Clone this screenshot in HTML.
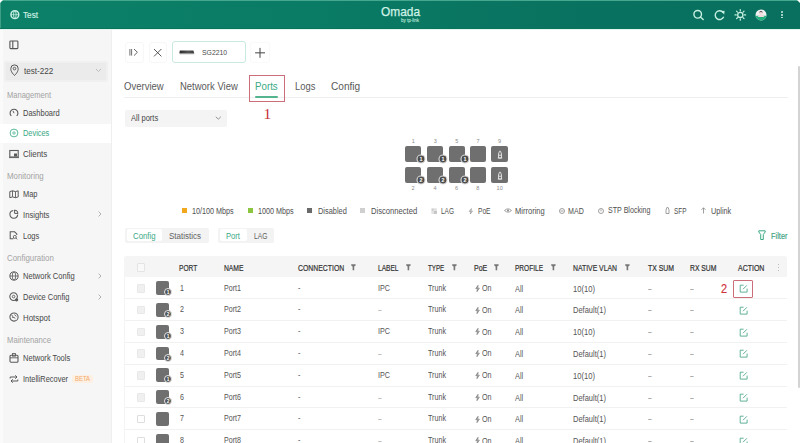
<!DOCTYPE html>
<html><head><meta charset="utf-8"><style>
html,body{margin:0;padding:0;width:800px;height:443px;overflow:hidden;background:#fff;position:relative}
.t{position:absolute;white-space:pre;line-height:20px;font-family:"Liberation Sans",sans-serif;transform-origin:0 50%}
.a{position:absolute;box-sizing:border-box}
svg{position:absolute;overflow:visible}
</style></head><body>
<div class="a" style="left:0.00px;top:0.00px;width:800.00px;height:29.00px;background:linear-gradient(90deg,#0c8168 0%,#0a7b65 40%,#09715f 75%,#09705f 100%);"></div>
<div class="a" style="left:0.00px;top:0.00px;width:800.00px;height:1.00px;background:#45a88e;"></div>
<div class="a" style="left:0.00px;top:0.00px;width:1.00px;height:29.00px;background:#3f9f86;"></div>
<div class="a" style="left:0.00px;top:28.00px;width:800.00px;height:1.00px;background:#07735b;"></div>
<div class="a" style="left:0.00px;top:29.00px;width:800.00px;height:1.00px;background:#e3f6ef;"></div>
<div class="a" style="left:0.00px;top:0.00px;width:3.00px;height:3.00px;background:#fff;clip-path:polygon(0 0,100% 0,0 100%)"></div>
<div class="a" style="left:797.00px;top:0.00px;width:3.00px;height:3.00px;background:#fff;clip-path:polygon(0 0,100% 0,100% 100%)"></div>
<div class="a" style="left:0.00px;top:30.00px;width:112.00px;height:413.00px;background:#f6f6f6;"></div>
<div class="a" style="left:0.00px;top:30.00px;width:2.50px;height:413.00px;background:#fafafa;"></div>
<div class="a" style="left:111.00px;top:30.00px;width:1.00px;height:413.00px;background:#efefef;"></div>
<svg style="left:9px;top:9px" width="12" height="12" viewBox="0 0 12 12"><circle cx="5.85" cy="5.65" r="3.9" fill="none" stroke="#c8f0e2" stroke-width="1.5"/><ellipse cx="5.85" cy="5.65" rx="1.3" ry="3.6" fill="none" stroke="#c8f0e2" stroke-width="0.9"/><line x1="2" y1="5.65" x2="9.7" y2="5.65" stroke="#c8f0e2" stroke-width="0.7"/></svg>
<svg style="left:692px;top:9px" width="14" height="14" viewBox="0 0 14 14"><circle cx="5.7" cy="5.3" r="3.8" fill="none" stroke="#c6f0e1" stroke-width="1.4"/><line x1="8.4" y1="8.1" x2="11.2" y2="10.6" stroke="#c6f0e1" stroke-width="1.4" stroke-linecap="round"/></svg>
<svg style="left:713px;top:9px" width="14" height="14" viewBox="0 0 14 14"><path d="M10.2 3.6 A4.4 4.4 0 1 0 10.7 7.8" fill="none" stroke="#c6f0e1" stroke-width="1.4"/><path d="M8 2.2 L11.6 1.8 L11.2 5.4 Z" fill="#c6f0e1"/></svg>
<svg style="left:733px;top:8px" width="14" height="14" viewBox="0 0 14 14"><circle cx="7.3" cy="6.9" r="2.6" fill="none" stroke="#c6f0e1" stroke-width="1.3"/><line x1="11.30" y1="6.90" x2="12.60" y2="6.90" stroke="#c6f0e1" stroke-width="1.2" stroke-linecap="round"/><line x1="10.13" y1="9.73" x2="11.05" y2="10.65" stroke="#c6f0e1" stroke-width="1.2" stroke-linecap="round"/><line x1="7.30" y1="10.90" x2="7.30" y2="12.20" stroke="#c6f0e1" stroke-width="1.2" stroke-linecap="round"/><line x1="4.47" y1="9.73" x2="3.55" y2="10.65" stroke="#c6f0e1" stroke-width="1.2" stroke-linecap="round"/><line x1="3.30" y1="6.90" x2="2.00" y2="6.90" stroke="#c6f0e1" stroke-width="1.2" stroke-linecap="round"/><line x1="4.47" y1="4.07" x2="3.55" y2="3.15" stroke="#c6f0e1" stroke-width="1.2" stroke-linecap="round"/><line x1="7.30" y1="2.90" x2="7.30" y2="1.60" stroke="#c6f0e1" stroke-width="1.2" stroke-linecap="round"/><line x1="10.13" y1="4.07" x2="11.05" y2="3.15" stroke="#c6f0e1" stroke-width="1.2" stroke-linecap="round"/></svg>
<svg style="left:755px;top:9px" width="12" height="12" viewBox="0 0 12 12"><defs><clipPath id="av"><circle cx="6" cy="5.9" r="5.5"/></clipPath></defs><circle cx="6" cy="5.9" r="5.5" fill="#f0f0f0"/><g clip-path="url(#av)"><rect x="0" y="6.8" width="12" height="6" fill="#22b07c"/><path d="M2.5 8 Q6 3.6 9.5 8 Z" fill="#f3d9dc"/><circle cx="6" cy="4" r="1.9" fill="#f3d9dc"/><path d="M3.9 3.6 Q6 0.6 8.1 3.6 Q6 2.6 3.9 3.6Z" fill="#3b3b3b"/></g></svg>
<div class="a" style="left:781.00px;top:11.20px;width:1.80px;height:1.60px;background:#cdeee3;border-radius:1px;"></div>
<div class="a" style="left:781.00px;top:14.00px;width:1.80px;height:1.60px;background:#cdeee3;border-radius:1px;"></div>
<div class="a" style="left:781.00px;top:16.80px;width:1.80px;height:1.60px;background:#cdeee3;border-radius:1px;"></div>
<svg style="left:9px;top:40px" width="10" height="10" viewBox="0 0 10 10"><rect x="0.9" y="1" width="8" height="7.6" rx="0.8" fill="none" stroke="#555" stroke-width="1.1"/><line x1="3.8" y1="1" x2="3.8" y2="8.6" stroke="#555" stroke-width="1.1"/></svg>
<div class="a" style="left:4.20px;top:60.60px;width:103.40px;height:21.40px;background:#ebebeb;border:2px solid #f0f0f0;border-radius:2px;"></div>
<svg style="left:10px;top:64px" width="9" height="13" viewBox="0 0 9 13"><path d="M4.5 11.5 C1 8 0.8 6 0.8 4.6 A3.7 3.7 0 0 1 8.2 4.6 C8.2 6 8 8 4.5 11.5Z" fill="none" stroke="#555" stroke-width="1"/><circle cx="4.5" cy="4.6" r="1.3" fill="none" stroke="#555" stroke-width="0.9"/></svg>
<svg style="left:95px;top:68px" width="7" height="5" viewBox="0 0 7 5"><path d="M1 1 L3.5 3.5 L6 1" fill="none" stroke="#b5b5b5" stroke-width="0.9"/></svg>
<div class="a" style="left:0.00px;top:124.30px;width:111.00px;height:18.30px;background:#ffffff;"></div>
<svg style="left:8.5px;top:108.3px" width="10" height="10" viewBox="0 0 10 10"><path d="M2.3 7.9 A3.9 3.9 0 1 1 7.7 7.9" fill="none" stroke="#5a5a5a" stroke-width="1.1"/><line x1="5" y1="5.2" x2="4" y2="2.9" stroke="#5a5a5a" stroke-width="1"/></svg>
<svg style="left:8.7px;top:128px" width="10" height="10" viewBox="0 0 10 10"><circle cx="5" cy="5" r="3.9" fill="none" stroke="#5ab999" stroke-width="1"/><circle cx="5" cy="5" r="1.2" fill="none" stroke="#5ab999" stroke-width="0.9"/></svg>
<svg style="left:9px;top:148.5px" width="10" height="10" viewBox="0 0 10 10"><rect x="0.8" y="1.5" width="8.4" height="6.5" fill="none" stroke="#5a5a5a" stroke-width="1.1"/><rect x="5" y="4.5" width="3" height="3" fill="#5a5a5a"/><line x1="0" y1="8.6" x2="10" y2="8.6" stroke="#5a5a5a" stroke-width="0.9"/></svg>
<svg style="left:9px;top:189.8px" width="10" height="9" viewBox="0 0 10 9"><path d="M0.8 1.6 L3.5 0.8 L6.5 1.6 L9.2 0.8 L9.2 6.9 L6.5 7.7 L3.5 6.9 L0.8 7.7 Z" fill="none" stroke="#5a5a5a" stroke-width="1"/><line x1="3.5" y1="0.8" x2="3.5" y2="6.9" stroke="#5a5a5a" stroke-width="0.9"/><line x1="6.5" y1="1.6" x2="6.5" y2="7.7" stroke="#5a5a5a" stroke-width="0.9"/></svg>
<svg style="left:9px;top:209.3px" width="10" height="10" viewBox="0 0 10 10"><path d="M4.3 1.4 A3.9 3.9 0 1 0 8.7 5.6" fill="none" stroke="#5a5a5a" stroke-width="1.05"/><path d="M5.6 1 A3.6 3.6 0 0 1 9 4.4 L5.6 4.4 Z" fill="none" stroke="#5a5a5a" stroke-width="1"/></svg>
<svg style="left:9px;top:230.5px" width="10" height="9" viewBox="0 0 10 9"><path d="M4.5 7.8 L1.2 7.8 L1.2 0.8 L5.6 0.8 L7.8 3 L7.8 4" fill="none" stroke="#5a5a5a" stroke-width="1.05"/><circle cx="5.8" cy="5.9" r="1.5" fill="none" stroke="#5a5a5a" stroke-width="0.9"/><line x1="6.9" y1="7" x2="8.3" y2="8.4" stroke="#5a5a5a" stroke-width="0.9"/></svg>
<svg style="left:9px;top:271px" width="10" height="10" viewBox="0 0 10 10"><circle cx="5" cy="5" r="4.1" fill="none" stroke="#5a5a5a" stroke-width="1"/><ellipse cx="5" cy="5" rx="1.7" ry="4.1" fill="none" stroke="#5a5a5a" stroke-width="0.8"/><line x1="0.9" y1="5" x2="9.1" y2="5" stroke="#5a5a5a" stroke-width="0.8"/></svg>
<svg style="left:9px;top:291.5px" width="10" height="10" viewBox="0 0 10 10"><circle cx="4.6" cy="4.6" r="3.8" fill="none" stroke="#5a5a5a" stroke-width="1.05"/><circle cx="4.6" cy="4.6" r="1.3" fill="none" stroke="#5a5a5a" stroke-width="0.9"/><circle cx="7.6" cy="7.8" r="1.6" fill="#5a5a5a"/></svg>
<svg style="left:9px;top:312px" width="10" height="10" viewBox="0 0 10 10"><circle cx="5" cy="5" r="4.1" fill="none" stroke="#5a5a5a" stroke-width="1.05"/><path d="M2.6 2.8 Q4.2 4.2 3.6 5.6 Q5 4.6 6.4 6.6 M5.4 2.6 L7.4 4.4" fill="none" stroke="#5a5a5a" stroke-width="0.9"/></svg>
<svg style="left:9px;top:353px" width="10" height="10" viewBox="0 0 10 10"><rect x="1" y="2.2" width="8" height="7" rx="1" fill="none" stroke="#5a5a5a" stroke-width="1.1"/><rect x="3.5" y="0.6" width="3" height="2.5" fill="none" stroke="#5a5a5a" stroke-width="0.9"/><line x1="1" y1="4.8" x2="9" y2="4.8" stroke="#5a5a5a" stroke-width="0.9"/></svg>
<svg style="left:9px;top:373.5px" width="10" height="10" viewBox="0 0 10 10"><path d="M1.2 4.5 L1.2 3 L8 3 M6.3 1.3 L8 3 L6.3 4.7 M8.8 5.5 L8.8 7 L2 7 M3.7 8.7 L2 7 L3.7 5.3" fill="none" stroke="#5a5a5a" stroke-width="1"/></svg>
<svg style="left:98px;top:211.1px" width="4" height="6" viewBox="0 0 4 6"><path d="M0.6 0.6 L3 3 L0.6 5.4" fill="none" stroke="#aaa" stroke-width="0.9"/></svg>
<svg style="left:98px;top:273px" width="4" height="6" viewBox="0 0 4 6"><path d="M0.6 0.6 L3 3 L0.6 5.4" fill="none" stroke="#aaa" stroke-width="0.9"/></svg>
<svg style="left:98px;top:293.5px" width="4" height="6" viewBox="0 0 4 6"><path d="M0.6 0.6 L3 3 L0.6 5.4" fill="none" stroke="#aaa" stroke-width="0.9"/></svg>
<div class="a" style="left:72.00px;top:374.60px;width:21.00px;height:8.50px;background:#fdf0e3;border-radius:2px;"></div>
<div class="a" style="left:125.00px;top:41.50px;width:18.50px;height:21.50px;background:#fff;border:1px solid #f7f7f7;border-radius:3px;"></div>
<div class="a" style="left:149.00px;top:41.50px;width:17.50px;height:21.50px;background:#fff;border:1px solid #f7f7f7;border-radius:3px;"></div>
<div class="a" style="left:172.30px;top:41.20px;width:73.60px;height:21.40px;background:#fff;border:1px solid #c8e9dd;border-radius:3px;"></div>
<div class="a" style="left:250.00px;top:41.50px;width:19.50px;height:21.50px;background:#fff;border:1px solid #f9f9f9;border-radius:3px;"></div>
<svg style="left:128px;top:47px" width="12" height="10" viewBox="0 0 12 10"><line x1="1.9" y1="2" x2="1.9" y2="8.6" stroke="#555" stroke-width="0.85"/><line x1="3.6" y1="2" x2="3.6" y2="8.6" stroke="#555" stroke-width="0.85"/><path d="M6 2 L9.4 5.3 L6 8.6" fill="none" stroke="#555" stroke-width="0.9"/></svg>
<svg style="left:153px;top:47.5px" width="10" height="10" viewBox="0 0 10 10"><path d="M1 1 L8.4 8.4 M8.4 1 L1 8.4" stroke="#444" stroke-width="0.9"/></svg>
<svg style="left:179px;top:49px" width="16" height="6" viewBox="0 0 16 6"><defs><linearGradient id="sw" x1="0" x2="1"><stop offset="0" stop-color="#2a2a2a"/><stop offset="0.6" stop-color="#555"/><stop offset="1" stop-color="#3a3a3a"/></linearGradient></defs><path d="M0.8 1.4 L14.4 1.4 L15.2 4.2 L0.4 4.2 Z" fill="url(#sw)"/><rect x="0.6" y="4.2" width="14.6" height="1" fill="#8a8a8a"/></svg>
<svg style="left:254px;top:46.5px" width="12" height="12" viewBox="0 0 12 12"><path d="M6 0.9 L6 10.8 M1.1 5.85 L11 5.85" stroke="#444" stroke-width="1"/></svg>
<div class="a" style="left:124.00px;top:97.00px;width:664.00px;height:1.00px;background:#f0eeee;"></div>
<div class="a" style="left:255.00px;top:95.60px;width:22.70px;height:2.00px;background:#52b48c;border-radius:1px;"></div>
<div class="a" style="left:249.00px;top:75.00px;width:36.30px;height:27.00px;border:1.2px solid #cc6e7a;"></div>
<div class="a" style="left:124.80px;top:109.80px;width:102.70px;height:16.80px;background:#f4f4f4;border-radius:2px;"></div>
<svg style="left:215.4px;top:116.2px" width="7" height="5" viewBox="0 0 7 5"><path d="M0.8 0.8 L3.3 3.2 L5.8 0.8" fill="none" stroke="#888" stroke-width="0.9"/></svg>
<div class="a" style="left:405.10px;top:145.50px;width:16.30px;height:16.30px;background:#6f6f6f;border-radius:2px;"></div>
<svg style="left:416.1px;top:153.5px" width="10" height="10" viewBox="0 0 10 10"><circle cx="5" cy="5" r="4" fill="#4d4d4d" stroke="#dcdcdc" stroke-width="1.1"/><text x="5" y="6.9" text-anchor="middle" font-family="Liberation Sans" font-weight="bold" font-size="5.4" fill="#fff">1</text></svg>
<div class="a" style="left:405.10px;top:166.50px;width:16.30px;height:16.30px;background:#6f6f6f;border-radius:2px;"></div>
<svg style="left:416.1px;top:174.5px" width="10" height="10" viewBox="0 0 10 10"><circle cx="5" cy="5" r="4" fill="#4d4d4d" stroke="#dcdcdc" stroke-width="1.1"/><text x="5" y="6.9" text-anchor="middle" font-family="Liberation Sans" font-weight="bold" font-size="5.4" fill="#fff">2</text></svg>
<div class="a" style="left:427.00px;top:145.50px;width:16.30px;height:16.30px;background:#6f6f6f;border-radius:2px;"></div>
<svg style="left:438px;top:153.5px" width="10" height="10" viewBox="0 0 10 10"><circle cx="5" cy="5" r="4" fill="#4d4d4d" stroke="#dcdcdc" stroke-width="1.1"/><text x="5" y="6.9" text-anchor="middle" font-family="Liberation Sans" font-weight="bold" font-size="5.4" fill="#fff">1</text></svg>
<div class="a" style="left:427.00px;top:166.50px;width:16.30px;height:16.30px;background:#6f6f6f;border-radius:2px;"></div>
<svg style="left:438px;top:174.5px" width="10" height="10" viewBox="0 0 10 10"><circle cx="5" cy="5" r="4" fill="#4d4d4d" stroke="#dcdcdc" stroke-width="1.1"/><text x="5" y="6.9" text-anchor="middle" font-family="Liberation Sans" font-weight="bold" font-size="5.4" fill="#fff">2</text></svg>
<div class="a" style="left:448.60px;top:145.50px;width:16.30px;height:16.30px;background:#6f6f6f;border-radius:2px;"></div>
<svg style="left:459.6px;top:153.5px" width="10" height="10" viewBox="0 0 10 10"><circle cx="5" cy="5" r="4" fill="#4d4d4d" stroke="#dcdcdc" stroke-width="1.1"/><text x="5" y="6.9" text-anchor="middle" font-family="Liberation Sans" font-weight="bold" font-size="5.4" fill="#fff">1</text></svg>
<div class="a" style="left:448.60px;top:166.50px;width:16.30px;height:16.30px;background:#6f6f6f;border-radius:2px;"></div>
<svg style="left:459.6px;top:174.5px" width="10" height="10" viewBox="0 0 10 10"><circle cx="5" cy="5" r="4" fill="#4d4d4d" stroke="#dcdcdc" stroke-width="1.1"/><text x="5" y="6.9" text-anchor="middle" font-family="Liberation Sans" font-weight="bold" font-size="5.4" fill="#fff">2</text></svg>
<div class="a" style="left:469.80px;top:145.50px;width:16.30px;height:16.30px;background:#6f6f6f;border-radius:2px;"></div>
<div class="a" style="left:469.80px;top:166.50px;width:16.30px;height:16.30px;background:#6f6f6f;border-radius:2px;"></div>
<div class="a" style="left:491.40px;top:145.50px;width:16.30px;height:16.30px;background:#6f6f6f;border-radius:2px;"></div>
<svg style="left:496.9px;top:149.5px" width="6" height="9" viewBox="0 0 6 9"><path d="M1.5 8 L1.5 4 L2.5 1.2 L3.5 1.2 L4.5 4 L4.5 8 Z M0.8 8 L5.2 8" fill="none" stroke="#e6e6e6" stroke-width="0.9"/><rect x="2.3" y="4.6" width="1.4" height="1.4" fill="#e6e6e6"/></svg>
<div class="a" style="left:491.40px;top:166.50px;width:16.30px;height:16.30px;background:#6f6f6f;border-radius:2px;"></div>
<svg style="left:496.9px;top:170.5px" width="6" height="9" viewBox="0 0 6 9"><path d="M1.5 8 L1.5 4 L2.5 1.2 L3.5 1.2 L4.5 4 L4.5 8 Z M0.8 8 L5.2 8" fill="none" stroke="#e6e6e6" stroke-width="0.9"/><rect x="2.3" y="4.6" width="1.4" height="1.4" fill="#e6e6e6"/></svg>
<div class="a" style="left:182.30px;top:208.15px;width:5.20px;height:5.20px;background:#f2a81e;"></div>
<div class="a" style="left:247.80px;top:208.15px;width:5.20px;height:5.20px;background:#8cc63f;"></div>
<div class="a" style="left:307.30px;top:208.15px;width:5.20px;height:5.20px;background:#6a6a6a;"></div>
<div class="a" style="left:360.30px;top:208.15px;width:5.20px;height:5.20px;background:#cfcfcf;"></div>
<svg style="left:430.5px;top:207.75px" width="7" height="7" viewBox="0 0 7 7"><rect x="0.3" y="0.3" width="5.6" height="5.6" fill="#e2e2e2"/><path d="M0.8 1.2 L3 1.2 M0.8 2.4 L2.2 2.4" stroke="#bbb" stroke-width="0.6"/><rect x="3" y="3" width="2.9" height="2.9" fill="#c4c4c4"/></svg>
<svg style="left:468px;top:207.55px" width="6" height="7" viewBox="0 0 6 7"><path d="M3.4 0.6 L1.2 3.5 L2.9 3.5 L2.3 6 L4.5 3.1 L2.8 3.1 Z" fill="none" stroke="#888" stroke-width="0.65"/></svg>
<svg style="left:503.5px;top:208.25px" width="8" height="5" viewBox="0 0 8 5"><path d="M0.5 2.5 Q4 -0.8 7.5 2.5 Q4 5.8 0.5 2.5Z" fill="none" stroke="#888" stroke-width="0.8"/><circle cx="4" cy="2.5" r="1" fill="#888"/></svg>
<svg style="left:558.5px;top:207.75px" width="6" height="6" viewBox="0 0 6 6"><circle cx="3" cy="3" r="2.5" fill="none" stroke="#888" stroke-width="0.8"/><line x1="1.5" y1="3" x2="4.5" y2="3" stroke="#888" stroke-width="0.8"/></svg>
<svg style="left:597.5px;top:207.75px" width="6" height="6" viewBox="0 0 6 6"><circle cx="3" cy="3" r="2.5" fill="none" stroke="#888" stroke-width="0.8"/><line x1="3" y1="1.5" x2="3" y2="3.3" stroke="#888" stroke-width="0.8"/></svg>
<svg style="left:664.8px;top:207.25px" width="5" height="7" viewBox="0 0 5 7"><path d="M1 6.5 L1 3 L1.8 0.6 L3.2 0.6 L4 3 L4 6.5 Z" fill="none" stroke="#888" stroke-width="0.8"/></svg>
<svg style="left:701px;top:207.25px" width="5" height="7" viewBox="0 0 5 7"><path d="M2.5 6.5 L2.5 0.8 M0.5 2.8 L2.5 0.8 L4.5 2.8" fill="none" stroke="#888" stroke-width="0.8"/></svg>
<div class="a" style="left:125.00px;top:227.60px;width:84.00px;height:15.40px;background:#f3f3f3;border-radius:2px;"></div>
<div class="a" style="left:127.00px;top:229.20px;width:35.00px;height:12.20px;background:#ffffff;border-radius:2px;"></div>
<div class="a" style="left:218.00px;top:227.60px;width:56.40px;height:15.40px;background:#f3f3f3;border-radius:2px;"></div>
<div class="a" style="left:220.00px;top:229.20px;width:27.00px;height:12.20px;background:#ffffff;border-radius:2px;"></div>
<svg style="left:758px;top:229.8px" width="8" height="10.5" viewBox="0 0 8 10.5"><path d="M0.8 0.8 L7.2 0.8 L7.2 2 L5.3 4.5 L5.3 9.5 L2.7 9.5 L2.7 4.5 L0.8 2 Z" fill="none" stroke="#3aa985" stroke-width="1"/></svg>
<div class="a" style="left:124.25px;top:256.00px;width:662.75px;height:20.60px;background:#f5f5f5;border-radius:3px 3px 0 0;"></div>
<div class="a" style="left:136.90px;top:263.00px;width:8.40px;height:8.80px;background:#f9f9f9;border:1px solid #e4e4e4;border-radius:1px;"></div>
<svg style="left:351.25px;top:264px" width="5" height="7" viewBox="0 0 5 7"><path d="M0.2 0.3 L4.6 0.3 L4.6 1.6 L3.2 2.6 L3.2 6.2 L1.6 6.2 L1.6 2.6 L0.2 1.6 Z" fill="#777"/></svg>
<svg style="left:405.5px;top:264px" width="5" height="7" viewBox="0 0 5 7"><path d="M0.2 0.3 L4.6 0.3 L4.6 1.6 L3.2 2.6 L3.2 6.2 L1.6 6.2 L1.6 2.6 L0.2 1.6 Z" fill="#777"/></svg>
<svg style="left:452px;top:264px" width="5" height="7" viewBox="0 0 5 7"><path d="M0.2 0.3 L4.6 0.3 L4.6 1.6 L3.2 2.6 L3.2 6.2 L1.6 6.2 L1.6 2.6 L0.2 1.6 Z" fill="#777"/></svg>
<svg style="left:494.25px;top:264px" width="5" height="7" viewBox="0 0 5 7"><path d="M0.2 0.3 L4.6 0.3 L4.6 1.6 L3.2 2.6 L3.2 6.2 L1.6 6.2 L1.6 2.6 L0.2 1.6 Z" fill="#777"/></svg>
<svg style="left:550.5px;top:264px" width="5" height="7" viewBox="0 0 5 7"><path d="M0.2 0.3 L4.6 0.3 L4.6 1.6 L3.2 2.6 L3.2 6.2 L1.6 6.2 L1.6 2.6 L0.2 1.6 Z" fill="#777"/></svg>
<svg style="left:624.5px;top:264px" width="5" height="7" viewBox="0 0 5 7"><path d="M0.2 0.3 L4.6 0.3 L4.6 1.6 L3.2 2.6 L3.2 6.2 L1.6 6.2 L1.6 2.6 L0.2 1.6 Z" fill="#777"/></svg>
<div class="a" style="left:777.60px;top:264.00px;width:1.00px;height:1.00px;background:#bbb;"></div>
<div class="a" style="left:777.60px;top:267.00px;width:1.00px;height:1.00px;background:#bbb;"></div>
<div class="a" style="left:777.60px;top:270.00px;width:1.00px;height:1.00px;background:#bbb;"></div>
<div class="a" style="left:124.00px;top:298.40px;width:663.00px;height:1.00px;background:#f1f1f1;"></div>
<div class="a" style="left:124.00px;top:320.20px;width:663.00px;height:1.00px;background:#f1f1f1;"></div>
<div class="a" style="left:124.00px;top:342.00px;width:663.00px;height:1.00px;background:#f1f1f1;"></div>
<div class="a" style="left:124.00px;top:363.80px;width:663.00px;height:1.00px;background:#f1f1f1;"></div>
<div class="a" style="left:124.00px;top:385.60px;width:663.00px;height:1.00px;background:#f1f1f1;"></div>
<div class="a" style="left:124.00px;top:407.40px;width:663.00px;height:1.00px;background:#f1f1f1;"></div>
<div class="a" style="left:124.00px;top:429.20px;width:663.00px;height:1.00px;background:#f1f1f1;"></div>
<div class="a" style="left:137.00px;top:284.00px;width:8.30px;height:8.60px;background:#f0f0f0;border:1px solid #e8e8e8;border-radius:1px;"></div>
<div class="a" style="left:155.50px;top:281.20px;width:13.80px;height:13.80px;background:#6f6f6f;border-radius:2px;"></div>
<svg style="left:163.4px;top:287.2px" width="10" height="10" viewBox="0 0 10 10"><circle cx="5" cy="5" r="3.5" fill="#555" stroke="#e6e6e6" stroke-width="1"/><text x="5" y="6.7" text-anchor="middle" font-family="Liberation Sans" font-weight="bold" font-size="4.8" fill="#fff">1</text></svg>
<svg style="left:475.4px;top:284.8px" width="5" height="7" viewBox="0 0 5 7"><path d="M3 0.4 L0.8 3.6 L2.5 3.6 L2 6.6 L4.3 3.2 L2.6 3.2 Z" fill="none" stroke="#666" stroke-width="0.7"/></svg>
<svg style="left:738.5px;top:283.9px" width="9" height="9" viewBox="0 0 9 9"><path d="M4.6 1.2 L1.2 1.2 L1.2 8.1 L8.1 8.1 L8.1 4.6" fill="none" stroke="#46a386" stroke-width="0.85" stroke-linejoin="miter"/><path d="M4 5.2 L7.9 1.3" stroke="#46a386" stroke-width="0.85"/></svg>
<div class="a" style="left:137.00px;top:305.80px;width:8.30px;height:8.60px;background:#f0f0f0;border:1px solid #e8e8e8;border-radius:1px;"></div>
<div class="a" style="left:155.50px;top:303.00px;width:13.80px;height:13.80px;background:#6f6f6f;border-radius:2px;"></div>
<svg style="left:163.4px;top:309.0px" width="10" height="10" viewBox="0 0 10 10"><circle cx="5" cy="5" r="3.5" fill="#555" stroke="#e6e6e6" stroke-width="1"/><text x="5" y="6.7" text-anchor="middle" font-family="Liberation Sans" font-weight="bold" font-size="4.8" fill="#fff">2</text></svg>
<svg style="left:475.4px;top:306.6px" width="5" height="7" viewBox="0 0 5 7"><path d="M3 0.4 L0.8 3.6 L2.5 3.6 L2 6.6 L4.3 3.2 L2.6 3.2 Z" fill="none" stroke="#666" stroke-width="0.7"/></svg>
<svg style="left:738.5px;top:305.7px" width="9" height="9" viewBox="0 0 9 9"><path d="M4.6 1.2 L1.2 1.2 L1.2 8.1 L8.1 8.1 L8.1 4.6" fill="none" stroke="#46a386" stroke-width="0.85" stroke-linejoin="miter"/><path d="M4 5.2 L7.9 1.3" stroke="#46a386" stroke-width="0.85"/></svg>
<div class="a" style="left:137.00px;top:327.60px;width:8.30px;height:8.60px;background:#f0f0f0;border:1px solid #e8e8e8;border-radius:1px;"></div>
<div class="a" style="left:155.50px;top:324.80px;width:13.80px;height:13.80px;background:#6f6f6f;border-radius:2px;"></div>
<svg style="left:163.4px;top:330.8px" width="10" height="10" viewBox="0 0 10 10"><circle cx="5" cy="5" r="3.5" fill="#555" stroke="#e6e6e6" stroke-width="1"/><text x="5" y="6.7" text-anchor="middle" font-family="Liberation Sans" font-weight="bold" font-size="4.8" fill="#fff">1</text></svg>
<svg style="left:475.4px;top:328.40000000000003px" width="5" height="7" viewBox="0 0 5 7"><path d="M3 0.4 L0.8 3.6 L2.5 3.6 L2 6.6 L4.3 3.2 L2.6 3.2 Z" fill="none" stroke="#666" stroke-width="0.7"/></svg>
<svg style="left:738.5px;top:327.5px" width="9" height="9" viewBox="0 0 9 9"><path d="M4.6 1.2 L1.2 1.2 L1.2 8.1 L8.1 8.1 L8.1 4.6" fill="none" stroke="#46a386" stroke-width="0.85" stroke-linejoin="miter"/><path d="M4 5.2 L7.9 1.3" stroke="#46a386" stroke-width="0.85"/></svg>
<div class="a" style="left:137.00px;top:349.40px;width:8.30px;height:8.60px;background:#f0f0f0;border:1px solid #e8e8e8;border-radius:1px;"></div>
<div class="a" style="left:155.50px;top:346.60px;width:13.80px;height:13.80px;background:#6f6f6f;border-radius:2px;"></div>
<svg style="left:163.4px;top:352.6px" width="10" height="10" viewBox="0 0 10 10"><circle cx="5" cy="5" r="3.5" fill="#555" stroke="#e6e6e6" stroke-width="1"/><text x="5" y="6.7" text-anchor="middle" font-family="Liberation Sans" font-weight="bold" font-size="4.8" fill="#fff">2</text></svg>
<svg style="left:475.4px;top:350.20000000000005px" width="5" height="7" viewBox="0 0 5 7"><path d="M3 0.4 L0.8 3.6 L2.5 3.6 L2 6.6 L4.3 3.2 L2.6 3.2 Z" fill="none" stroke="#666" stroke-width="0.7"/></svg>
<svg style="left:738.5px;top:349.3px" width="9" height="9" viewBox="0 0 9 9"><path d="M4.6 1.2 L1.2 1.2 L1.2 8.1 L8.1 8.1 L8.1 4.6" fill="none" stroke="#46a386" stroke-width="0.85" stroke-linejoin="miter"/><path d="M4 5.2 L7.9 1.3" stroke="#46a386" stroke-width="0.85"/></svg>
<div class="a" style="left:137.00px;top:371.20px;width:8.30px;height:8.60px;background:#f0f0f0;border:1px solid #e8e8e8;border-radius:1px;"></div>
<div class="a" style="left:155.50px;top:368.40px;width:13.80px;height:13.80px;background:#6f6f6f;border-radius:2px;"></div>
<svg style="left:163.4px;top:374.4px" width="10" height="10" viewBox="0 0 10 10"><circle cx="5" cy="5" r="3.5" fill="#555" stroke="#e6e6e6" stroke-width="1"/><text x="5" y="6.7" text-anchor="middle" font-family="Liberation Sans" font-weight="bold" font-size="4.8" fill="#fff">1</text></svg>
<svg style="left:475.4px;top:372.0px" width="5" height="7" viewBox="0 0 5 7"><path d="M3 0.4 L0.8 3.6 L2.5 3.6 L2 6.6 L4.3 3.2 L2.6 3.2 Z" fill="none" stroke="#666" stroke-width="0.7"/></svg>
<svg style="left:738.5px;top:371.09999999999997px" width="9" height="9" viewBox="0 0 9 9"><path d="M4.6 1.2 L1.2 1.2 L1.2 8.1 L8.1 8.1 L8.1 4.6" fill="none" stroke="#46a386" stroke-width="0.85" stroke-linejoin="miter"/><path d="M4 5.2 L7.9 1.3" stroke="#46a386" stroke-width="0.85"/></svg>
<div class="a" style="left:137.00px;top:393.00px;width:8.30px;height:8.60px;background:#f0f0f0;border:1px solid #e8e8e8;border-radius:1px;"></div>
<div class="a" style="left:155.50px;top:390.20px;width:13.80px;height:13.80px;background:#6f6f6f;border-radius:2px;"></div>
<svg style="left:163.4px;top:396.2px" width="10" height="10" viewBox="0 0 10 10"><circle cx="5" cy="5" r="3.5" fill="#555" stroke="#e6e6e6" stroke-width="1"/><text x="5" y="6.7" text-anchor="middle" font-family="Liberation Sans" font-weight="bold" font-size="4.8" fill="#fff">2</text></svg>
<svg style="left:475.4px;top:393.8px" width="5" height="7" viewBox="0 0 5 7"><path d="M3 0.4 L0.8 3.6 L2.5 3.6 L2 6.6 L4.3 3.2 L2.6 3.2 Z" fill="none" stroke="#666" stroke-width="0.7"/></svg>
<svg style="left:738.5px;top:392.9px" width="9" height="9" viewBox="0 0 9 9"><path d="M4.6 1.2 L1.2 1.2 L1.2 8.1 L8.1 8.1 L8.1 4.6" fill="none" stroke="#46a386" stroke-width="0.85" stroke-linejoin="miter"/><path d="M4 5.2 L7.9 1.3" stroke="#46a386" stroke-width="0.85"/></svg>
<div class="a" style="left:137.00px;top:414.80px;width:8.30px;height:8.60px;background:#fff;border:1px solid #dedede;border-radius:1px;"></div>
<div class="a" style="left:155.50px;top:412.00px;width:13.80px;height:13.80px;background:#6f6f6f;border-radius:2px;"></div>
<svg style="left:475.4px;top:415.6px" width="5" height="7" viewBox="0 0 5 7"><path d="M3 0.4 L0.8 3.6 L2.5 3.6 L2 6.6 L4.3 3.2 L2.6 3.2 Z" fill="none" stroke="#666" stroke-width="0.7"/></svg>
<svg style="left:738.5px;top:414.7px" width="9" height="9" viewBox="0 0 9 9"><path d="M4.6 1.2 L1.2 1.2 L1.2 8.1 L8.1 8.1 L8.1 4.6" fill="none" stroke="#46a386" stroke-width="0.85" stroke-linejoin="miter"/><path d="M4 5.2 L7.9 1.3" stroke="#46a386" stroke-width="0.85"/></svg>
<div class="a" style="left:137.00px;top:436.60px;width:8.30px;height:8.60px;background:#fff;border:1px solid #dedede;border-radius:1px;"></div>
<div class="a" style="left:155.50px;top:433.80px;width:13.80px;height:13.80px;background:#6f6f6f;border-radius:2px;"></div>
<svg style="left:475.4px;top:437.4px" width="5" height="7" viewBox="0 0 5 7"><path d="M3 0.4 L0.8 3.6 L2.5 3.6 L2 6.6 L4.3 3.2 L2.6 3.2 Z" fill="none" stroke="#666" stroke-width="0.7"/></svg>
<svg style="left:738.5px;top:436.49999999999994px" width="9" height="9" viewBox="0 0 9 9"><path d="M4.6 1.2 L1.2 1.2 L1.2 8.1 L8.1 8.1 L8.1 4.6" fill="none" stroke="#46a386" stroke-width="0.85" stroke-linejoin="miter"/><path d="M4 5.2 L7.9 1.3" stroke="#46a386" stroke-width="0.85"/></svg>
<div class="a" style="left:124.00px;top:277.00px;width:1.00px;height:166.00px;background:#f4f4f4;"></div>
<div class="a" style="left:733.40px;top:279.50px;width:19.20px;height:18.80px;border:1.2px solid #cc6e7a;border-radius:1px;"></div>
<div class="a" style="left:797.60px;top:65.60px;width:2.40px;height:322.70px;background:#d3d3d3;border-radius:1px;"></div>
<span class="t" style="left:23.00px;top:5.40px;font-size:9.41px;color:#d2f2e6;font-family:'Liberation Sans',sans-serif;font-weight:400;transform:scaleX(0.8696);-webkit-text-stroke:0.15px #d2f2e6;">Test</span><span class="t" style="left:381.00px;top:2.40px;font-size:12.25px;color:#d0f3e6;font-family:'Liberation Sans',sans-serif;font-weight:400;transform:scaleX(0.9709);-webkit-text-stroke:0.25px #d0f3e6;">Omada</span><span class="t" style="left:401.00px;top:10.60px;font-size:4.50px;color:#b8e6d6;font-family:'Liberation Sans',sans-serif;font-weight:400;-webkit-text-stroke:0.1px #b8e6d6;">by tp-link</span><span class="t" style="left:23.70px;top:61.40px;font-size:9.33px;color:#474747;font-family:'Liberation Sans',sans-serif;font-weight:400;transform:scaleX(0.8696);">test-222</span><span class="t" style="left:6.90px;top:84.90px;font-size:8.69px;color:#a3a3a3;font-family:'Liberation Sans',sans-serif;font-weight:400;transform:scaleX(0.8696);">Management</span><span class="t" style="left:22.70px;top:102.90px;font-size:8.63px;color:#474747;font-family:'Liberation Sans',sans-serif;font-weight:400;transform:scaleX(0.8696);">Dashboard</span><span class="t" style="left:22.70px;top:123.40px;font-size:8.50px;color:#3aa985;font-family:'Liberation Sans',sans-serif;font-weight:400;transform:scaleX(0.8696);">Devices</span><span class="t" style="left:22.70px;top:143.90px;font-size:9.14px;color:#474747;font-family:'Liberation Sans',sans-serif;font-weight:400;transform:scaleX(0.8696);">Clients</span><span class="t" style="left:6.90px;top:166.20px;font-size:9.06px;color:#a3a3a3;font-family:'Liberation Sans',sans-serif;font-weight:400;transform:scaleX(0.8696);">Monitoring</span><span class="t" style="left:23.10px;top:184.40px;font-size:8.57px;color:#474747;font-family:'Liberation Sans',sans-serif;font-weight:400;transform:scaleX(0.8696);">Map</span><span class="t" style="left:23.10px;top:204.50px;font-size:8.84px;color:#474747;font-family:'Liberation Sans',sans-serif;font-weight:400;transform:scaleX(0.8696);">Insights</span><span class="t" style="left:23.10px;top:225.80px;font-size:8.64px;color:#474747;font-family:'Liberation Sans',sans-serif;font-weight:400;transform:scaleX(0.8696);">Logs</span><span class="t" style="left:6.90px;top:248.00px;font-size:9.07px;color:#a3a3a3;font-family:'Liberation Sans',sans-serif;font-weight:400;transform:scaleX(0.8696);">Configuration</span><span class="t" style="left:23.10px;top:266.40px;font-size:8.71px;color:#474747;font-family:'Liberation Sans',sans-serif;font-weight:400;transform:scaleX(0.8696);">Network Config</span><span class="t" style="left:23.10px;top:286.90px;font-size:8.57px;color:#474747;font-family:'Liberation Sans',sans-serif;font-weight:400;transform:scaleX(0.8696);">Device Config</span><span class="t" style="left:23.10px;top:307.60px;font-size:9.04px;color:#474747;font-family:'Liberation Sans',sans-serif;font-weight:400;transform:scaleX(0.8696);">Hotspot</span><span class="t" style="left:6.90px;top:329.80px;font-size:8.84px;color:#a3a3a3;font-family:'Liberation Sans',sans-serif;font-weight:400;transform:scaleX(0.8696);">Maintenance</span><span class="t" style="left:23.10px;top:348.30px;font-size:8.69px;color:#474747;font-family:'Liberation Sans',sans-serif;font-weight:400;transform:scaleX(0.8696);">Network Tools</span><span class="t" style="left:23.10px;top:368.70px;font-size:8.56px;color:#474747;font-family:'Liberation Sans',sans-serif;font-weight:400;transform:scaleX(0.8696);">IntelliRecover</span><span class="t" style="left:75.00px;top:369.40px;font-size:6.80px;color:#f2a86a;font-family:'Liberation Sans',sans-serif;font-weight:400;transform:scaleX(0.8696);">BETA</span><span class="t" style="left:201.50px;top:42.50px;font-size:8.10px;color:#4a4a4a;font-family:'Liberation Sans',sans-serif;font-weight:400;transform:scaleX(0.8478);">SG2210</span><span class="t" style="left:124.30px;top:76.00px;font-size:10.60px;color:#5a5a5a;font-family:'Liberation Sans',sans-serif;font-weight:400;transform:scaleX(0.8987);">Overview</span><span class="t" style="left:180.20px;top:76.00px;font-size:10.60px;color:#5a5a5a;font-family:'Liberation Sans',sans-serif;font-weight:400;transform:scaleX(0.8947);">Network View</span><span class="t" style="left:255.00px;top:76.00px;font-size:10.60px;color:#3aa985;font-family:'Liberation Sans',sans-serif;font-weight:400;transform:scaleX(0.9175);">Ports</span><span class="t" style="left:294.60px;top:76.00px;font-size:10.60px;color:#5a5a5a;font-family:'Liberation Sans',sans-serif;font-weight:400;transform:scaleX(0.8875);">Logs</span><span class="t" style="left:331.40px;top:76.00px;font-size:10.60px;color:#5a5a5a;font-family:'Liberation Sans',sans-serif;font-weight:400;transform:scaleX(0.9530);">Config</span><span class="t" style="left:263.60px;top:103.60px;font-size:15.50px;color:#c8303a;font-family:'Liberation Serif',sans-serif;font-weight:400;">1</span><span class="t" style="left:130.80px;top:108.20px;font-size:8.66px;color:#474747;font-family:'Liberation Sans',sans-serif;font-weight:400;transform:scaleX(0.8696);">All ports</span><span class="t" style="left:411.80px;top:130.50px;font-size:5.50px;color:#8a8a8a;font-family:'Liberation Sans',sans-serif;font-weight:400;">1</span><span class="t" style="left:411.60px;top:178.20px;font-size:5.50px;color:#8a8a8a;font-family:'Liberation Sans',sans-serif;font-weight:400;">2</span><span class="t" style="left:433.70px;top:130.50px;font-size:5.50px;color:#8a8a8a;font-family:'Liberation Sans',sans-serif;font-weight:400;">3</span><span class="t" style="left:433.50px;top:178.20px;font-size:5.50px;color:#8a8a8a;font-family:'Liberation Sans',sans-serif;font-weight:400;">4</span><span class="t" style="left:455.30px;top:130.50px;font-size:5.50px;color:#8a8a8a;font-family:'Liberation Sans',sans-serif;font-weight:400;">5</span><span class="t" style="left:455.10px;top:178.20px;font-size:5.50px;color:#8a8a8a;font-family:'Liberation Sans',sans-serif;font-weight:400;">6</span><span class="t" style="left:476.50px;top:130.50px;font-size:5.50px;color:#8a8a8a;font-family:'Liberation Sans',sans-serif;font-weight:400;">7</span><span class="t" style="left:476.30px;top:178.20px;font-size:5.50px;color:#8a8a8a;font-family:'Liberation Sans',sans-serif;font-weight:400;">8</span><span class="t" style="left:498.10px;top:130.50px;font-size:5.50px;color:#8a8a8a;font-family:'Liberation Sans',sans-serif;font-weight:400;">9</span><span class="t" style="left:496.60px;top:178.20px;font-size:5.50px;color:#8a8a8a;font-family:'Liberation Sans',sans-serif;font-weight:400;">10</span><span class="t" style="left:192.00px;top:201.15px;font-size:8.30px;color:#4f4f4f;font-family:'Liberation Sans',sans-serif;font-weight:400;transform:scaleX(0.8696);">10/100 Mbps</span><span class="t" style="left:257.50px;top:201.15px;font-size:8.31px;color:#4f4f4f;font-family:'Liberation Sans',sans-serif;font-weight:400;transform:scaleX(0.8696);">1000 Mbps</span><span class="t" style="left:317.50px;top:201.15px;font-size:8.50px;color:#4f4f4f;font-family:'Liberation Sans',sans-serif;font-weight:400;transform:scaleX(0.8696);">Disabled</span><span class="t" style="left:370.50px;top:201.15px;font-size:8.78px;color:#4f4f4f;font-family:'Liberation Sans',sans-serif;font-weight:400;transform:scaleX(0.8696);">Disconnected</span><span class="t" style="left:440.75px;top:201.15px;font-size:8.80px;color:#4f4f4f;font-family:'Liberation Sans',sans-serif;font-weight:400;transform:scaleX(0.7382);">LAG</span><span class="t" style="left:477.50px;top:201.15px;font-size:8.80px;color:#4f4f4f;font-family:'Liberation Sans',sans-serif;font-weight:400;transform:scaleX(0.7515);">PoE</span><span class="t" style="left:514.50px;top:201.15px;font-size:8.67px;color:#4f4f4f;font-family:'Liberation Sans',sans-serif;font-weight:400;transform:scaleX(0.8696);">Mirroring</span><span class="t" style="left:568.00px;top:201.15px;font-size:8.80px;color:#4f4f4f;font-family:'Liberation Sans',sans-serif;font-weight:400;transform:scaleX(0.8054);">MAD</span><span class="t" style="left:608.00px;top:201.15px;font-size:8.17px;color:#4f4f4f;font-family:'Liberation Sans',sans-serif;font-weight:400;transform:scaleX(0.8696);">STP Blocking</span><span class="t" style="left:674.25px;top:201.15px;font-size:8.80px;color:#4f4f4f;font-family:'Liberation Sans',sans-serif;font-weight:400;transform:scaleX(0.7304);">SFP</span><span class="t" style="left:710.50px;top:201.15px;font-size:8.38px;color:#4f4f4f;font-family:'Liberation Sans',sans-serif;font-weight:400;transform:scaleX(0.8696);">Uplink</span><span class="t" style="left:133.00px;top:225.50px;font-size:8.99px;color:#3aa985;font-family:'Liberation Sans',sans-serif;font-weight:400;transform:scaleX(0.8696);">Config</span><span class="t" style="left:169.00px;top:225.50px;font-size:9.20px;color:#606060;font-family:'Liberation Sans',sans-serif;font-weight:400;transform:scaleX(0.8696);">Statistics</span><span class="t" style="left:225.60px;top:225.50px;font-size:8.78px;color:#3aa985;font-family:'Liberation Sans',sans-serif;font-weight:400;transform:scaleX(0.8696);">Port</span><span class="t" style="left:253.60px;top:225.50px;font-size:8.80px;color:#606060;font-family:'Liberation Sans',sans-serif;font-weight:400;transform:scaleX(0.7609);">LAG</span><span class="t" style="left:770.75px;top:226.10px;font-size:8.54px;color:#3a9f80;font-family:'Liberation Sans',sans-serif;font-weight:400;transform:scaleX(0.8696);-webkit-text-stroke:0.15px #3a9f80;">Filter</span><span class="t" style="left:179.25px;top:258.00px;font-size:8.30px;color:#333;font-family:'Liberation Sans',sans-serif;font-weight:400;transform:scaleX(0.7967);-webkit-text-stroke:0.2px #333;">PORT</span><span class="t" style="left:223.50px;top:258.00px;font-size:8.30px;color:#333;font-family:'Liberation Sans',sans-serif;font-weight:400;transform:scaleX(0.8132);-webkit-text-stroke:0.2px #333;">NAME</span><span class="t" style="left:297.50px;top:258.00px;font-size:8.30px;color:#333;font-family:'Liberation Sans',sans-serif;font-weight:400;transform:scaleX(0.8289);-webkit-text-stroke:0.2px #333;">CONNECTION</span><span class="t" style="left:377.50px;top:258.00px;font-size:8.30px;color:#333;font-family:'Liberation Sans',sans-serif;font-weight:400;transform:scaleX(0.7933);-webkit-text-stroke:0.2px #333;">LABEL</span><span class="t" style="left:428.25px;top:258.00px;font-size:8.30px;color:#333;font-family:'Liberation Sans',sans-serif;font-weight:400;transform:scaleX(0.7496);-webkit-text-stroke:0.2px #333;">TYPE</span><span class="t" style="left:473.75px;top:258.00px;font-size:8.30px;color:#333;font-family:'Liberation Sans',sans-serif;font-weight:400;transform:scaleX(0.8446);-webkit-text-stroke:0.2px #333;">PoE</span><span class="t" style="left:515.00px;top:258.00px;font-size:8.30px;color:#333;font-family:'Liberation Sans',sans-serif;font-weight:400;transform:scaleX(0.7884);-webkit-text-stroke:0.2px #333;">PROFILE</span><span class="t" style="left:573.00px;top:258.00px;font-size:8.30px;color:#333;font-family:'Liberation Sans',sans-serif;font-weight:400;transform:scaleX(0.8247);-webkit-text-stroke:0.2px #333;">NATIVE VLAN</span><span class="t" style="left:648.00px;top:258.00px;font-size:8.30px;color:#333;font-family:'Liberation Sans',sans-serif;font-weight:400;transform:scaleX(0.8292);-webkit-text-stroke:0.2px #333;">TX SUM</span><span class="t" style="left:689.60px;top:258.00px;font-size:8.30px;color:#333;font-family:'Liberation Sans',sans-serif;font-weight:400;transform:scaleX(0.8178);-webkit-text-stroke:0.2px #333;">RX SUM</span><span class="t" style="left:738.00px;top:258.00px;font-size:8.30px;color:#333;font-family:'Liberation Sans',sans-serif;font-weight:400;transform:scaleX(0.8419);-webkit-text-stroke:0.2px #333;">ACTION</span><span class="t" style="left:721.40px;top:279.40px;font-size:12.20px;color:#d0303a;font-family:'Liberation Sans',sans-serif;font-weight:400;transform:scaleX(0.8929);-webkit-text-stroke:0.2px #d0303a;">2</span><span class="t" style="left:180.00px;top:278.60px;font-size:8.20px;color:#555555;font-family:'Liberation Sans',sans-serif;font-weight:400;transform:scaleX(0.8696);">1</span><span class="t" style="left:223.50px;top:278.60px;font-size:8.18px;color:#555555;font-family:'Liberation Sans',sans-serif;font-weight:400;transform:scaleX(0.8696);">Port1</span><span class="t" style="left:298.30px;top:278.60px;font-size:8.20px;color:#555555;font-family:'Liberation Sans',sans-serif;font-weight:400;transform:scaleX(0.8696);">-</span><span class="t" style="left:378.00px;top:278.60px;font-size:8.28px;color:#555555;font-family:'Liberation Sans',sans-serif;font-weight:400;transform:scaleX(0.8696);">IPC</span><span class="t" style="left:428.20px;top:278.60px;font-size:8.22px;color:#555555;font-family:'Liberation Sans',sans-serif;font-weight:400;transform:scaleX(0.8696);">Trunk</span><span class="t" style="left:481.60px;top:278.00px;font-size:8.60px;color:#555555;font-family:'Liberation Sans',sans-serif;font-weight:400;transform:scaleX(0.8368);">On</span><span class="t" style="left:515.20px;top:278.60px;font-size:8.60px;color:#555555;font-family:'Liberation Sans',sans-serif;font-weight:400;transform:scaleX(0.8579);">All</span><span class="t" style="left:573.00px;top:278.60px;font-size:8.75px;color:#555555;font-family:'Liberation Sans',sans-serif;font-weight:400;transform:scaleX(0.8696);">10(10)</span><span class="t" style="left:648.00px;top:278.60px;font-size:7.40px;color:#666;font-family:'Liberation Sans',sans-serif;font-weight:400;transform:scaleX(0.8696);">–</span><span class="t" style="left:690.00px;top:278.60px;font-size:7.40px;color:#666;font-family:'Liberation Sans',sans-serif;font-weight:400;transform:scaleX(0.8696);">–</span><span class="t" style="left:180.00px;top:300.40px;font-size:8.20px;color:#555555;font-family:'Liberation Sans',sans-serif;font-weight:400;transform:scaleX(0.8696);">2</span><span class="t" style="left:223.50px;top:300.40px;font-size:8.18px;color:#555555;font-family:'Liberation Sans',sans-serif;font-weight:400;transform:scaleX(0.8696);">Port2</span><span class="t" style="left:298.30px;top:300.40px;font-size:8.20px;color:#555555;font-family:'Liberation Sans',sans-serif;font-weight:400;transform:scaleX(0.8696);">-</span><span class="t" style="left:378.00px;top:300.40px;font-size:7.20px;color:#888;font-family:'Liberation Sans',sans-serif;font-weight:400;transform:scaleX(0.8696);">–</span><span class="t" style="left:428.20px;top:300.40px;font-size:8.22px;color:#555555;font-family:'Liberation Sans',sans-serif;font-weight:400;transform:scaleX(0.8696);">Trunk</span><span class="t" style="left:481.60px;top:299.80px;font-size:8.60px;color:#555555;font-family:'Liberation Sans',sans-serif;font-weight:400;transform:scaleX(0.8368);">On</span><span class="t" style="left:515.20px;top:300.40px;font-size:8.60px;color:#555555;font-family:'Liberation Sans',sans-serif;font-weight:400;transform:scaleX(0.8579);">All</span><span class="t" style="left:573.00px;top:300.40px;font-size:8.64px;color:#555555;font-family:'Liberation Sans',sans-serif;font-weight:400;transform:scaleX(0.8696);">Default(1)</span><span class="t" style="left:648.00px;top:300.40px;font-size:7.40px;color:#666;font-family:'Liberation Sans',sans-serif;font-weight:400;transform:scaleX(0.8696);">–</span><span class="t" style="left:690.00px;top:300.40px;font-size:7.40px;color:#666;font-family:'Liberation Sans',sans-serif;font-weight:400;transform:scaleX(0.8696);">–</span><span class="t" style="left:180.00px;top:322.20px;font-size:8.20px;color:#555555;font-family:'Liberation Sans',sans-serif;font-weight:400;transform:scaleX(0.8696);">3</span><span class="t" style="left:223.50px;top:322.20px;font-size:8.18px;color:#555555;font-family:'Liberation Sans',sans-serif;font-weight:400;transform:scaleX(0.8696);">Port3</span><span class="t" style="left:298.30px;top:322.20px;font-size:8.20px;color:#555555;font-family:'Liberation Sans',sans-serif;font-weight:400;transform:scaleX(0.8696);">-</span><span class="t" style="left:378.00px;top:322.20px;font-size:8.28px;color:#555555;font-family:'Liberation Sans',sans-serif;font-weight:400;transform:scaleX(0.8696);">IPC</span><span class="t" style="left:428.20px;top:322.20px;font-size:8.22px;color:#555555;font-family:'Liberation Sans',sans-serif;font-weight:400;transform:scaleX(0.8696);">Trunk</span><span class="t" style="left:481.60px;top:321.60px;font-size:8.60px;color:#555555;font-family:'Liberation Sans',sans-serif;font-weight:400;transform:scaleX(0.8368);">On</span><span class="t" style="left:515.20px;top:322.20px;font-size:8.60px;color:#555555;font-family:'Liberation Sans',sans-serif;font-weight:400;transform:scaleX(0.8579);">All</span><span class="t" style="left:573.00px;top:322.20px;font-size:8.75px;color:#555555;font-family:'Liberation Sans',sans-serif;font-weight:400;transform:scaleX(0.8696);">10(10)</span><span class="t" style="left:648.00px;top:322.20px;font-size:7.40px;color:#666;font-family:'Liberation Sans',sans-serif;font-weight:400;transform:scaleX(0.8696);">–</span><span class="t" style="left:690.00px;top:322.20px;font-size:7.40px;color:#666;font-family:'Liberation Sans',sans-serif;font-weight:400;transform:scaleX(0.8696);">–</span><span class="t" style="left:180.00px;top:344.00px;font-size:8.20px;color:#555555;font-family:'Liberation Sans',sans-serif;font-weight:400;transform:scaleX(0.8696);">4</span><span class="t" style="left:223.50px;top:344.00px;font-size:8.18px;color:#555555;font-family:'Liberation Sans',sans-serif;font-weight:400;transform:scaleX(0.8696);">Port4</span><span class="t" style="left:298.30px;top:344.00px;font-size:8.20px;color:#555555;font-family:'Liberation Sans',sans-serif;font-weight:400;transform:scaleX(0.8696);">-</span><span class="t" style="left:378.00px;top:344.00px;font-size:7.20px;color:#888;font-family:'Liberation Sans',sans-serif;font-weight:400;transform:scaleX(0.8696);">–</span><span class="t" style="left:428.20px;top:344.00px;font-size:8.22px;color:#555555;font-family:'Liberation Sans',sans-serif;font-weight:400;transform:scaleX(0.8696);">Trunk</span><span class="t" style="left:481.60px;top:343.40px;font-size:8.60px;color:#555555;font-family:'Liberation Sans',sans-serif;font-weight:400;transform:scaleX(0.8368);">On</span><span class="t" style="left:515.20px;top:344.00px;font-size:8.60px;color:#555555;font-family:'Liberation Sans',sans-serif;font-weight:400;transform:scaleX(0.8579);">All</span><span class="t" style="left:573.00px;top:344.00px;font-size:8.64px;color:#555555;font-family:'Liberation Sans',sans-serif;font-weight:400;transform:scaleX(0.8696);">Default(1)</span><span class="t" style="left:648.00px;top:344.00px;font-size:7.40px;color:#666;font-family:'Liberation Sans',sans-serif;font-weight:400;transform:scaleX(0.8696);">–</span><span class="t" style="left:690.00px;top:344.00px;font-size:7.40px;color:#666;font-family:'Liberation Sans',sans-serif;font-weight:400;transform:scaleX(0.8696);">–</span><span class="t" style="left:180.00px;top:365.80px;font-size:8.20px;color:#555555;font-family:'Liberation Sans',sans-serif;font-weight:400;transform:scaleX(0.8696);">5</span><span class="t" style="left:223.50px;top:365.80px;font-size:8.18px;color:#555555;font-family:'Liberation Sans',sans-serif;font-weight:400;transform:scaleX(0.8696);">Port5</span><span class="t" style="left:298.30px;top:365.80px;font-size:8.20px;color:#555555;font-family:'Liberation Sans',sans-serif;font-weight:400;transform:scaleX(0.8696);">-</span><span class="t" style="left:378.00px;top:365.80px;font-size:8.28px;color:#555555;font-family:'Liberation Sans',sans-serif;font-weight:400;transform:scaleX(0.8696);">IPC</span><span class="t" style="left:428.20px;top:365.80px;font-size:8.22px;color:#555555;font-family:'Liberation Sans',sans-serif;font-weight:400;transform:scaleX(0.8696);">Trunk</span><span class="t" style="left:481.60px;top:365.20px;font-size:8.60px;color:#555555;font-family:'Liberation Sans',sans-serif;font-weight:400;transform:scaleX(0.8368);">On</span><span class="t" style="left:515.20px;top:365.80px;font-size:8.60px;color:#555555;font-family:'Liberation Sans',sans-serif;font-weight:400;transform:scaleX(0.8579);">All</span><span class="t" style="left:573.00px;top:365.80px;font-size:8.75px;color:#555555;font-family:'Liberation Sans',sans-serif;font-weight:400;transform:scaleX(0.8696);">10(10)</span><span class="t" style="left:648.00px;top:365.80px;font-size:7.40px;color:#666;font-family:'Liberation Sans',sans-serif;font-weight:400;transform:scaleX(0.8696);">–</span><span class="t" style="left:690.00px;top:365.80px;font-size:7.40px;color:#666;font-family:'Liberation Sans',sans-serif;font-weight:400;transform:scaleX(0.8696);">–</span><span class="t" style="left:180.00px;top:387.60px;font-size:8.20px;color:#555555;font-family:'Liberation Sans',sans-serif;font-weight:400;transform:scaleX(0.8696);">6</span><span class="t" style="left:223.50px;top:387.60px;font-size:8.18px;color:#555555;font-family:'Liberation Sans',sans-serif;font-weight:400;transform:scaleX(0.8696);">Port6</span><span class="t" style="left:298.30px;top:387.60px;font-size:8.20px;color:#555555;font-family:'Liberation Sans',sans-serif;font-weight:400;transform:scaleX(0.8696);">-</span><span class="t" style="left:378.00px;top:387.60px;font-size:7.20px;color:#888;font-family:'Liberation Sans',sans-serif;font-weight:400;transform:scaleX(0.8696);">–</span><span class="t" style="left:428.20px;top:387.60px;font-size:8.22px;color:#555555;font-family:'Liberation Sans',sans-serif;font-weight:400;transform:scaleX(0.8696);">Trunk</span><span class="t" style="left:481.60px;top:387.00px;font-size:8.60px;color:#555555;font-family:'Liberation Sans',sans-serif;font-weight:400;transform:scaleX(0.8368);">On</span><span class="t" style="left:515.20px;top:387.60px;font-size:8.60px;color:#555555;font-family:'Liberation Sans',sans-serif;font-weight:400;transform:scaleX(0.8579);">All</span><span class="t" style="left:573.00px;top:387.60px;font-size:8.64px;color:#555555;font-family:'Liberation Sans',sans-serif;font-weight:400;transform:scaleX(0.8696);">Default(1)</span><span class="t" style="left:648.00px;top:387.60px;font-size:7.40px;color:#666;font-family:'Liberation Sans',sans-serif;font-weight:400;transform:scaleX(0.8696);">–</span><span class="t" style="left:690.00px;top:387.60px;font-size:7.40px;color:#666;font-family:'Liberation Sans',sans-serif;font-weight:400;transform:scaleX(0.8696);">–</span><span class="t" style="left:180.00px;top:409.40px;font-size:8.20px;color:#555555;font-family:'Liberation Sans',sans-serif;font-weight:400;transform:scaleX(0.8696);">7</span><span class="t" style="left:223.50px;top:409.40px;font-size:8.18px;color:#555555;font-family:'Liberation Sans',sans-serif;font-weight:400;transform:scaleX(0.8696);">Port7</span><span class="t" style="left:298.30px;top:409.40px;font-size:8.20px;color:#555555;font-family:'Liberation Sans',sans-serif;font-weight:400;transform:scaleX(0.8696);">-</span><span class="t" style="left:378.00px;top:409.40px;font-size:7.20px;color:#888;font-family:'Liberation Sans',sans-serif;font-weight:400;transform:scaleX(0.8696);">–</span><span class="t" style="left:428.20px;top:409.40px;font-size:8.22px;color:#555555;font-family:'Liberation Sans',sans-serif;font-weight:400;transform:scaleX(0.8696);">Trunk</span><span class="t" style="left:481.60px;top:408.80px;font-size:8.60px;color:#555555;font-family:'Liberation Sans',sans-serif;font-weight:400;transform:scaleX(0.8368);">On</span><span class="t" style="left:515.20px;top:409.40px;font-size:8.60px;color:#555555;font-family:'Liberation Sans',sans-serif;font-weight:400;transform:scaleX(0.8579);">All</span><span class="t" style="left:573.00px;top:409.40px;font-size:8.64px;color:#555555;font-family:'Liberation Sans',sans-serif;font-weight:400;transform:scaleX(0.8696);">Default(1)</span><span class="t" style="left:648.00px;top:409.40px;font-size:7.40px;color:#666;font-family:'Liberation Sans',sans-serif;font-weight:400;transform:scaleX(0.8696);">–</span><span class="t" style="left:690.00px;top:409.40px;font-size:7.40px;color:#666;font-family:'Liberation Sans',sans-serif;font-weight:400;transform:scaleX(0.8696);">–</span><span class="t" style="left:180.00px;top:431.20px;font-size:8.20px;color:#555555;font-family:'Liberation Sans',sans-serif;font-weight:400;transform:scaleX(0.8696);">8</span><span class="t" style="left:223.50px;top:431.20px;font-size:8.18px;color:#555555;font-family:'Liberation Sans',sans-serif;font-weight:400;transform:scaleX(0.8696);">Port8</span><span class="t" style="left:298.30px;top:431.20px;font-size:8.20px;color:#555555;font-family:'Liberation Sans',sans-serif;font-weight:400;transform:scaleX(0.8696);">-</span><span class="t" style="left:378.00px;top:431.20px;font-size:7.20px;color:#888;font-family:'Liberation Sans',sans-serif;font-weight:400;transform:scaleX(0.8696);">–</span><span class="t" style="left:428.20px;top:431.20px;font-size:8.22px;color:#555555;font-family:'Liberation Sans',sans-serif;font-weight:400;transform:scaleX(0.8696);">Trunk</span><span class="t" style="left:481.60px;top:430.60px;font-size:8.60px;color:#555555;font-family:'Liberation Sans',sans-serif;font-weight:400;transform:scaleX(0.8368);">On</span><span class="t" style="left:515.20px;top:431.20px;font-size:8.60px;color:#555555;font-family:'Liberation Sans',sans-serif;font-weight:400;transform:scaleX(0.8579);">All</span><span class="t" style="left:573.00px;top:431.20px;font-size:8.64px;color:#555555;font-family:'Liberation Sans',sans-serif;font-weight:400;transform:scaleX(0.8696);">Default(1)</span><span class="t" style="left:648.00px;top:431.20px;font-size:7.40px;color:#666;font-family:'Liberation Sans',sans-serif;font-weight:400;transform:scaleX(0.8696);">–</span><span class="t" style="left:690.00px;top:431.20px;font-size:7.40px;color:#666;font-family:'Liberation Sans',sans-serif;font-weight:400;transform:scaleX(0.8696);">–</span>
</body></html>
